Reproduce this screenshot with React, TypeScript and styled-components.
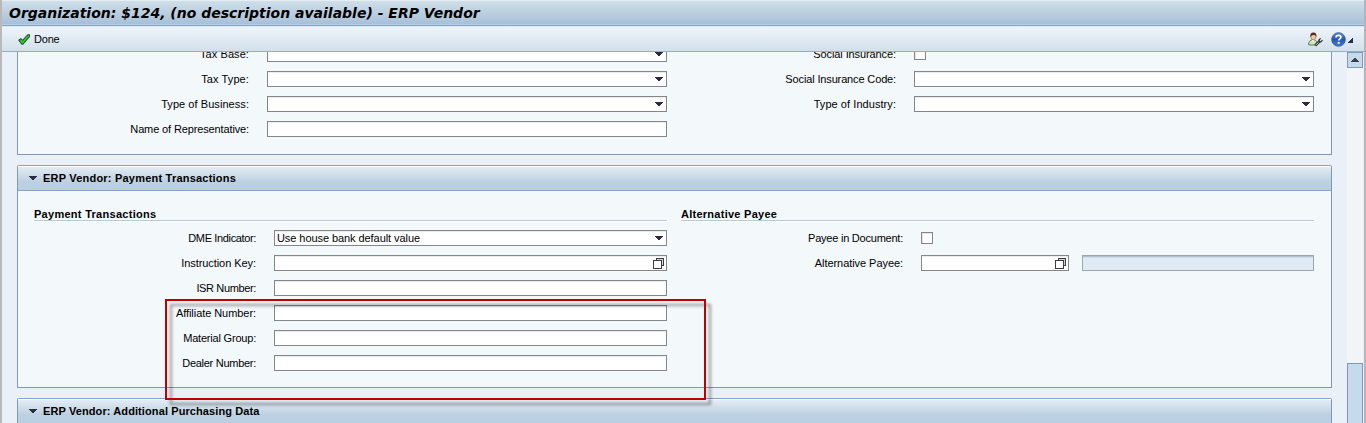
import React from "react";
import styled, { createGlobalStyle } from "styled-components";

const GlobalStyle = createGlobalStyle`
  html, body { margin: 0; padding: 0; }
  body {
    font-family: "Liberation Sans", Arial, sans-serif;
    font-size: 11px;
    line-height: 16px;
    color: #000;
    overflow: hidden;
  }
`;

const Window = styled.div`
  position: relative;
  box-sizing: border-box;
  width: 1366px;
  height: 423px;
  display: flex;
  flex-direction: column;
  overflow: hidden;
  background: #e9f0f7;
  border-left: 2px solid #b9b9b9;
  border-right: 2px solid #b5b5b5;
`;

const TitleBar = styled.header`
  box-sizing: border-box;
  flex: none;
  height: 26px;
  padding: 0 7px;
  border-top: 1px solid #e6edf3;
  border-bottom: 1px solid #84a5c6;
  background: linear-gradient(#cfdfe9, #c3d5e3 30%, #a6bfd8);
  box-shadow: inset 0 -1px 0 #b9cee2;
`;

const Title = styled.h1`
  margin: 0;
  font: italic bold 14px/24px "DejaVu Sans", Verdana, sans-serif;
  letter-spacing: 0;
  white-space: nowrap;
`;

const Toolbar = styled.div`
  box-sizing: border-box;
  flex: none;
  height: 26px;
  padding: 0 11px 0 16px;
  display: flex;
  align-items: center;
  justify-content: space-between;
  border-top: 1px solid #d9e8f5;
  border-bottom: 1px solid #8fafca;
  background: linear-gradient(#eff4fc, #d2e0ea);
`;

const ToolButton = styled.button`
  display: flex;
  align-items: center;
  gap: 3px;
  padding: 0;
  border: 0;
  background: none;
  font: inherit;
  letter-spacing: -0.2px;
  color: inherit;
`;

const ToolIcons = styled.div`
  display: flex;
  align-items: center;
`;

const Body = styled.div`
  flex: 1;
  min-height: 0;
  display: flex;
  overflow: hidden;
`;

const Scrolled = styled.main`
  flex: 1;
  height: 371px;
  padding: 0 15px;
  overflow: hidden;
`;

const Panel = styled.section<{ $open?: boolean }>`
  box-sizing: border-box;
  width: 1315px;
  margin-bottom: 10px;
  border: 1px solid #8099b3;
  border-top: ${(p) => (p.$open ? "0" : "1px solid #85a5c6")};
  border-radius: ${(p) => (p.$open ? "0" : "2px 2px 0 0")};
  background: #f3f8fb;
`;

const PanelHeader = styled.div`
  box-sizing: border-box;
  height: 25px;
  padding: 0 0 1px 11px;
  display: flex;
  align-items: center;
  gap: 6px;
  border-top: 1px solid #fff;
  border-bottom: 1px solid #85a5c6;
  background: linear-gradient(#e3ecf3, #bcd0e1 65%, #b9d0e2);
`;

const Bold = styled.span<{ $track?: number }>`
  font-weight: bold;
  letter-spacing: ${(p) => p.$track ?? 0}px;
  white-space: nowrap;
`;

const Columns = styled.div<{ $top: number; $height: number }>`
  box-sizing: border-box;
  height: ${(p) => p.$height}px;
  padding: 0 17px 0 16px;
  margin-top: ${(p) => p.$top}px;
  display: grid;
  grid-template-columns: 633px 633px;
  column-gap: 14px;
`;

const Column = styled.div`
  display: flex;
  flex-direction: column;
  gap: 9px;
`;

const GroupTitle = styled.div`
  box-sizing: border-box;
  height: 15px;
  padding-top: 2px;
  line-height: 14px;
  border-bottom: 1px solid #b4cbd9;
  box-shadow: 0 1px 0 #fff;
  display: flex;
  align-items: center;
`;

const Row = styled.div<{ $label: number }>`
  display: grid;
  grid-template-columns: ${(p) => p.$label}px 1fr;
  column-gap: 18px;
  align-items: center;
  height: 16px;
`;

const Label = styled.label<{ $track?: number }>`
  text-align: right;
  white-space: nowrap;
  letter-spacing: ${(p) => p.$track ?? 0}px;
`;

const Controls = styled.div`
  display: flex;
  align-items: center;
  gap: 13px;
`;

const Field = styled.div<{ $width?: number; $readOnly?: boolean; $help?: boolean }>`
  box-sizing: border-box;
  flex: ${(p) => (p.$width ? "none" : "1")};
  width: ${(p) => (p.$width ? `${p.$width}px` : "auto")};
  height: 16px;
  line-height: 14px;
  padding: 0 ${(p) => (p.$help ? 2 : 3)}px 0 2px;
  display: flex;
  align-items: center;
  justify-content: space-between;
  border: 1px solid ${(p) => (p.$readOnly ? "#9da6ae" : "#83878d")};
  background: ${(p) => (p.$readOnly ? "#deebf5" : "#fff")};
  box-shadow: ${(p) =>
    p.$readOnly ? "inset 0 1px 0 #b4bfc9, inset 0 2px 0 #d2dee8" : "inset 0 1px 0 #ececef"};
  letter-spacing: -0.07px;
  white-space: nowrap;
`;

const Checkbox = styled.div`
  box-sizing: border-box;
  width: 12px;
  height: 12px;
  border: 1px solid #83878d;
  background: #fff;
  box-shadow: inset 1px 1px 0 #e6e6e9;
`;

const ScrollTrack = styled.div`
  flex: none;
  width: 16px;
  margin-right: 1px;
  display: flex;
  flex-direction: column;
  justify-content: space-between;
  background: #f1f5f8;
`;

const ScrollButton = styled.div`
  box-sizing: border-box;
  height: 16px;
  display: flex;
  align-items: center;
  justify-content: center;
  border: 1px solid #8299b1;
  background: #c5daeb;
`;

const ScrollThumb = styled.div`
  box-sizing: border-box;
  height: 60px;
  border: 1px solid #8299ad;
  border-bottom: 0;
  background: #c5daeb;
`;

const Highlight = styled.div`
  position: absolute;
  left: 163px;
  top: 299px;
  box-sizing: border-box;
  width: 541px;
  height: 101px;
  border: 2px solid #c00000;
  filter: drop-shadow(5px 5px 1.5px rgba(0, 0, 0, 0.4));
  pointer-events: none;
`;

const CaretDown = () => (
  <svg width="8" height="4" viewBox="0 0 8 4" shapeRendering="crispEdges">
    <path d="M0 0h8v1H0zM1 1h6v1H1zM2 2h4v1H2zM3 3h2v1H3z" fill="#2b2b45" />
  </svg>
);

const HelpValue = () => (
  <svg width="11" height="11" viewBox="0 0 11 11" shapeRendering="crispEdges">
    <path d="M3.5.5h7v7h-7z" fill="#c9d3da" stroke="#403c38" />
    <path d="M.5 2.5h8v8h-8z" fill="#fff" stroke="#403c38" />
  </svg>
);

const CheckIcon = () => (
  <svg width="13" height="11" viewBox="0 0 13 11">
    <path
      d="M.8 6.200 2.800 4.700 4.700 6.300 9.900.7h1.600v2L4.900 10.200H3.800z"
      fill="#35d21f"
      stroke="#24563f"
      strokeWidth="1.100"
      strokeLinejoin="round"
    />
  </svg>
);

const PersonIcon = () => (
  <svg width="15" height="15" viewBox="0 0 15 15">
    <path d="M.6 12.800C.4 9.800 2 8 4.700 7.600c2.400 0 3.600 1.200 4 2.600L7 13H2z" fill="#cfe5bf" stroke="#5c7a4d" />
    <path d="M3.700 7.600h3L5.300 10z" fill="#fff" />
    <ellipse cx="5.300" cy="4.700" rx="2.500" ry="3.100" fill="#f5c99b" stroke="#8a5a38" strokeWidth=".6" />
    <path d="M2.300 5C1.900 1.700 3.200.4 5.400.4s3.500 1.400 3 4.600C7.600 3.600 7 3 5.600 3 4 3 3.200 3.700 2.300 5z" fill="#56301a" />
    <path d="m7.200 13.600 4.600-4.600" stroke="#2b2b2b" strokeWidth="2.600" />
    <path d="m7.600 13.200 4-4" stroke="#d5d8da" />
    <path d="M12.600 6.300 10.900 8v1.900h1.900L14.500 8.200" fill="none" stroke="#2b2b2b" strokeWidth="1.200" />
  </svg>
);

const HelpIcon = () => (
  <svg width="15" height="15" viewBox="0 0 15 15">
    <defs>
      <linearGradient id="help" x1="0" y1="0" x2="0" y2="1">
        <stop offset="0" stopColor="#5f8fdb" />
        <stop offset="0.5" stopColor="#2855b4" />
        <stop offset="1" stopColor="#4a7fd6" />
      </linearGradient>
    </defs>
    <circle cx="7.500" cy="7.500" r="6.800" fill="url(#help)" stroke="#2b4d97" strokeWidth=".8" />
    <path d="M5 5.500C5.100 3.800 6.200 3.300 7.500 3.300s2.400.7 2.400 2c0 1.500-2.200 1.600-2.200 3.300" fill="none" stroke="#fff" strokeWidth="1.700" />
    <path d="M6.700 9.900h1.900v1.800H6.700z" fill="#fff" />
  </svg>
);

const CornerMark = () => (
  <svg width="5" height="5" viewBox="0 0 5 5" shapeRendering="crispEdges">
    <path d="M4 0h1v1H4zM3 1h2v1H3zM2 2h3v1H2zM1 3h4v1H1zM0 4h5v1H0z" fill="#2b2b45" />
  </svg>
);

const IconSlot = styled.span<{ $left?: number; $top?: number }>`
  display: flex;
  margin-left: ${(p) => p.$left ?? 0}px;
  margin-top: ${(p) => p.$top ?? 0}px;
`;

const ScrollArrow = () => (
  <svg width="8" height="4" viewBox="0 0 8 4" shapeRendering="crispEdges">
    <path d="M3 0h2v1H3zM2 1h4v1H2zM1 2h6v1H1zM0 3h8v1H0z" fill="#3a4050" />
  </svg>
);

type RowProps = {
  label: string;
  width: number;
  kind?: "text" | "select" | "help" | "check" | "payee";
  value?: string;
  track?: number;
};

const FormRow = ({ label, width, kind = "text", value, track }: RowProps) => (
  <Row $label={width}>
    <Label $track={track}>{label}</Label>
    <Controls>
      {kind === "check" && <Checkbox />}
      {kind === "text" && <Field />}
      {kind === "select" && (
        <Field>
          <span>{value}</span>
          <CaretDown />
        </Field>
      )}
      {kind === "help" && (
        <Field $help>
          <span />
          <HelpValue />
        </Field>
      )}
      {kind === "payee" && (
        <>
          <Field $width={148} $help>
            <span />
            <HelpValue />
          </Field>
          <Field $readOnly />
        </>
      )}
    </Controls>
  </Row>
);

export default function App() {
  return (
    <Window>
      <GlobalStyle />
      <TitleBar>
        <Title>Organization: $124, (no description available) - ERP Vendor</Title>
      </TitleBar>
      <Toolbar>
        <ToolButton>
          <CheckIcon />
          <span>Done</span>
        </ToolButton>
        <ToolIcons>
          <PersonIcon />
          <IconSlot $left={8}>
            <HelpIcon />
          </IconSlot>
          <IconSlot $left={2} $top={3}>
            <CornerMark />
          </IconSlot>
        </ToolIcons>
      </Toolbar>
      <Body>
        <Scrolled>
          <Panel $open>
            <Columns $top={-6} $height={108}>
              <Column>
                <FormRow width={215} kind="select" label="Tax Base:" track={0.08} />
                <FormRow width={215} kind="select" label="Tax Type:" track={0.1} />
                <FormRow width={215} kind="select" label="Type of Business:" track={0.06} />
                <FormRow width={215} label="Name of Representative:" track={-0.13} />
              </Column>
              <Column>
                <FormRow width={215} kind="check" label="Social Insurance:" track={-0.1} />
                <FormRow width={215} kind="select" label="Social Insurance Code:" track={-0.14} />
                <FormRow width={215} kind="select" label="Type of Industry:" track={0.06} />
              </Column>
            </Columns>
          </Panel>
          <Panel>
            <PanelHeader>
              <CaretDown />
              <Bold $track={0.21}>ERP Vendor: Payment Transactions</Bold>
            </PanelHeader>
            <Columns $top={15} $height={181}>
              <Column>
                <GroupTitle>
                  <Bold $track={0.28}>Payment Transactions</Bold>
                </GroupTitle>
                <FormRow width={222} kind="select" label="DME Indicator:" value="Use house bank default value" track={-0.36} />
                <FormRow width={222} kind="help" label="Instruction Key:" track={-0.06} />
                <FormRow width={222} label="ISR Number:" track={-0.36} />
                <FormRow width={222} label="Affiliate Number:" track={-0.06} />
                <FormRow width={222} label="Material Group:" track={-0.2} />
                <FormRow width={222} label="Dealer Number:" track={-0.28} />
              </Column>
              <Column>
                <GroupTitle>
                  <Bold $track={0.26}>Alternative Payee</Bold>
                </GroupTitle>
                <FormRow width={222} kind="check" label="Payee in Document:" track={-0.23} />
                <FormRow width={222} kind="payee" label="Alternative Payee:" track={-0.06} />
              </Column>
            </Columns>
          </Panel>
          <Panel>
            <PanelHeader>
              <CaretDown />
              <Bold $track={0.1}>ERP Vendor: Additional Purchasing Data</Bold>
            </PanelHeader>
          </Panel>
        </Scrolled>
        <ScrollTrack>
          <ScrollButton>
            <ScrollArrow />
          </ScrollButton>
          <ScrollThumb />
        </ScrollTrack>
      </Body>
      <Highlight />
    </Window>
  );
}
